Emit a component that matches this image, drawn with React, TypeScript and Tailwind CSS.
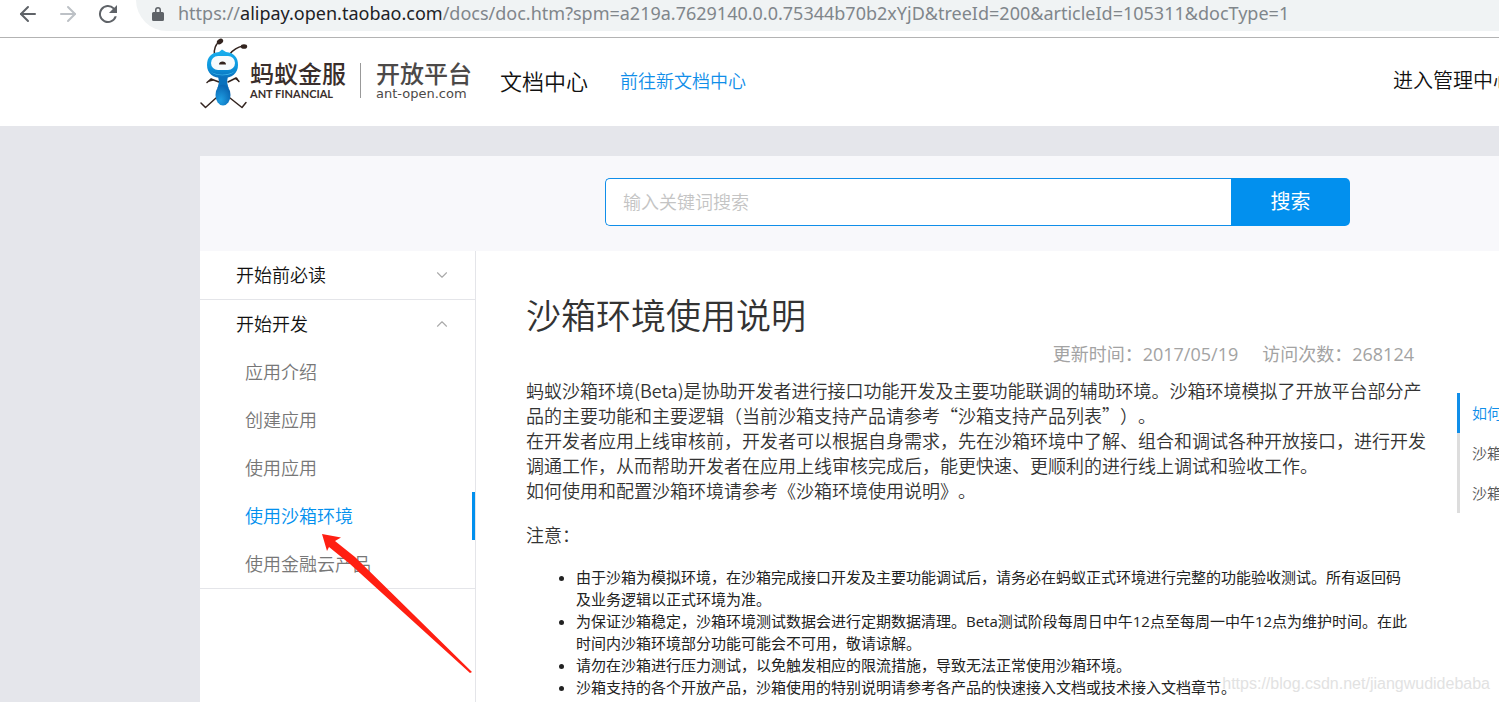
import { ArrowLeft, ArrowRight, ChevronDown, ChevronUp } from 'lucide-react';

const articles = ['应用介绍', '创建应用', '使用应用', '使用沙箱环境', '使用金融云产品'];

const intro = [
  '蚂蚁沙箱环境(Beta)是协助开发者进行接口功能开发及主要功能联调的辅助环境。沙箱环境模拟了开放平台部分产',
  '品的主要功能和主要逻辑（当前沙箱支持产品请参考“沙箱支持产品列表”）。',
  '在开发者应用上线审核前，开发者可以根据自身需求，先在沙箱环境中了解、组合和调试各种开放接口，进行开发',
  '调通工作，从而帮助开发者在应用上线审核完成后，能更快速、更顺利的进行线上调试和验收工作。',
  '如何使用和配置沙箱环境请参考《沙箱环境使用说明》。',
];

const notes = [
  '由于沙箱为模拟环境，在沙箱完成接口开发及主要功能调试后，请务必在蚂蚁正式环境进行完整的功能验收测试。所有返回码及业务逻辑以正式环境为准。',
  '为保证沙箱稳定，沙箱环境测试数据会进行定期数据清理。Beta测试阶段每周日中午12点至每周一中午12点为维护时间。在此时间内沙箱环境部分功能可能会不可用，敬请谅解。',
  '请勿在沙箱进行压力测试，以免触发相应的限流措施，导致无法正常使用沙箱环境。',
  '沙箱支持的各个开放产品，沙箱使用的特别说明请参考各产品的快速接入文档或技术接入文档章节。',
];

const AntLogo = () => (
  <svg className="h-[72px] w-[48px] shrink-0" viewBox="0 0 48 72" fill="none">
    <defs>
      <linearGradient id="head" x1="0" y1="0" x2="0" y2="1">
        <stop offset="0" stopColor="#1ab0ee" />
        <stop offset="0.6" stopColor="#0d97de" />
        <stop offset="1" stopColor="#0b6fbb" />
      </linearGradient>
      <radialGradient id="belly" cx="0.35" cy="0.75" r="0.7">
        <stop offset="0" stopColor="#1f9fe3" />
        <stop offset="1" stopColor="#0a68b4" />
      </radialGradient>
    </defs>
    <g stroke="#33241f" strokeWidth="1.5" strokeLinecap="round" strokeLinejoin="round">
      <path d="M14.500 17C13.500 11 16 6 19 4" />
      <path d="M30 16C33 12 38 9 43 8" />
      <path d="M19 44l-8-3-4 3.500" />
      <path d="M28 44l8-4 3 3.500" />
      <path d="M16 60L5.500 69.500 1 65" />
      <path d="M30 60l12 9.500 4-5" />
    </g>
    <path d="M8 44l3-3.500 3 2zM34 40.500l3-1 2 4z" fill="#33241f" />
    <ellipse cx="20" cy="3.500" rx="3.400" ry="2.500" transform="rotate(-35 20 3.500)" fill="#33241f" />
    <ellipse cx="44" cy="8.500" rx="3.200" ry="2.300" fill="#33241f" />
    <path d="M18 38h10l-1 6 1.500 6h-11l1.500-6z" fill="#0a72bd" />
    <path d="M19 14l3-2.500 4 2.500c8 1 12 5 12 13 0 8.500-6 13-15.500 13S7 35.500 7 27c0-8 4-12 12-13z" fill="url(#head)" />
    <path d="M10 33c6 5 18 5 25 0-3 3-7 4.200-12.500 4.200S13 36 10 33z" fill="#4fc6f5" />
    <rect x="11" y="18" width="24" height="14" rx="7" fill="#f7fbfd" />
    <path d="M19 26.500c0-2 1.500-3 3.500-3s3.500 1 3.500 3z" fill="#33241f" />
    <ellipse cx="23" cy="57" rx="7.500" ry="10.500" fill="url(#belly)" />
  </svg>
);

const AddressBar = () => (
  <div className="flex h-[38px] items-start border-b border-[#b3b3b3] bg-white pl-4">
    <button aria-label="Back" className="mt-0.5 text-[#5f6368]">
      <ArrowLeft size={24} strokeWidth={2} />
    </button>
    <button aria-label="Forward" className="mt-0.5 ml-4 text-[#bdc1c6]">
      <ArrowRight size={24} strokeWidth={2} />
    </button>
    <button aria-label="Reload" className="mt-0.5 ml-4 text-[#5f6368]">
      <svg className="size-6" viewBox="0 0 24 24" fill="currentColor">
        <path d="M18.360 5.640A9 9 0 1 0 20.700 14.200h-2.100A7 7 0 1 1 16.900 7.100L13 11h8V3z" />
      </svg>
    </button>
    <div className="ml-4 flex h-[31px] flex-1 items-center rounded-bl-full bg-[#f0f3f4] pb-1 pl-4">
      <svg className="h-4 w-3 shrink-0" viewBox="0 0 12 16" fill="#5f6368">
        <path d="M1.500 6H3V4a3 3 0 0 1 6 0v2h1.500A1.500 1.500 0 0 1 12 7.500v6A1.500 1.500 0 0 1 10.500 15h-9A1.500 1.500 0 0 1 0 13.500v-6A1.500 1.500 0 0 1 1.500 6zm3 0h3V4a1.500 1.500 0 0 0-3 0z" />
      </svg>
      <span className="ml-3.5 font-['Noto_Sans'] text-[18px] whitespace-nowrap text-[#80868b]">
        https://<span className="text-[#202124]">alipay.open.taobao.com</span>
        /docs/doc.htm?spm=a219a.7629140.0.0.75344b70b2xYjD&amp;treeId=200&amp;articleId=105311&amp;docType=1
      </span>
    </div>
  </div>
);

const Header = () => (
  <header className="flex h-[88px] items-center overflow-hidden bg-white pb-0.5 pl-[200px] whitespace-nowrap">
    <a href="#" className="flex h-full items-start text-[#3a2e2b]">
      <AntLogo />
      <span className="mt-[22px] ml-0.5 block">
        <span className="block text-[24px] leading-[28px] font-medium">蚂蚁金服</span>
        <span className="block font-['Lato'] text-[11px] leading-[12px] font-bold">ANT FINANCIAL</span>
      </span>
      <span className="mt-[25px] ml-[14px] block h-[35px] w-px bg-[#999]" />
      <span className="mt-[22px] ml-[15px] block text-[#4c4948]">
        <span className="block text-[24px] leading-[28px] font-medium">开放平台</span>
        <span className="block font-['DejaVu_Sans'] text-[13px] leading-[12px]">ant-open.com</span>
      </span>
    </a>
    <span className="ml-7 text-[22px] font-[350] text-[#111]">文档中心</span>
    <a href="#" className="ml-8 text-[18px] font-[350] text-[#108ee9]">前往新文档中心</a>
    <a href="#" className="mr-[-14px] ml-auto text-[20px] font-[350] text-[#111]">进入管理中心</a>
  </header>
);

const SearchBar = () => (
  <form className="flex h-[95px] items-start bg-[#f8f8fb] pt-[22px] pr-[149px] pl-[405px]">
    <input
      type="search"
      aria-label="输入关键词搜索"
      placeholder="输入关键词搜索"
      className="h-12 min-w-0 flex-1 rounded-l-[5px] border border-r-0 border-[#108ee9] bg-white px-[17px] text-[18px] font-[350] outline-none placeholder:text-[#c4c4c4]"
    />
    <button type="button" className="h-12 w-[119px] rounded-r-[5px] bg-[#0290ee] text-[20px] text-white">
      搜索
    </button>
  </form>
);

const Sidebar = () => (
  <nav className="w-[276px] shrink-0 border-r border-[#e4e5e9] text-[18px] font-[350]">
    <button className="flex h-[49px] w-full items-center justify-between border-b border-[#e4e5e9] pr-6 pl-9 text-[#111]">
      开始前必读
      <ChevronDown size={18} strokeWidth={1.5} className="text-[#aaa]" />
    </button>
    <div className="border-b border-[#e4e5e9]">
      <button className="flex h-12 w-full items-center justify-between pr-6 pl-9 text-[#111]">
        开始开发
        <ChevronUp size={18} strokeWidth={1.5} className="text-[#aaa]" />
      </button>
      {articles.map((name) => (
        <a
          key={name}
          href="#"
          className={
            name === '使用沙箱环境'
              ? 'flex h-12 items-center border-r-3 border-[#0290ee] pl-[45px] text-[#0290ee]'
              : 'flex h-12 items-center pl-[45px] text-[#777]'
          }
        >
          {name}
        </a>
      ))}
    </div>
  </nav>
);

const Article = () => (
  <article className="min-w-0 flex-1 pt-10 pr-[43px] pl-[50px] text-[#333]">
    <h1 className="text-[35px] leading-[50px] font-[350]">沙箱环境使用说明</h1>
    <p className="mt-px flex justify-end gap-6 text-[18px] leading-[25px] text-[#a3a3a3]">
      <span>更新时间：2017/05/19</span>
      <span>访问次数：268124</span>
    </p>
    <p className="mt-[11px] font-['Noto_Sans_CJK_SC'] text-[18px] leading-[25px] font-[350] whitespace-nowrap [text-spacing-trim:space-all]">
      {intro.map((line) => (
        <span key={line} className="block">{line}</span>
      ))}
    </p>
    <p className="mt-5 text-[18px] leading-[25px] font-[350]">注意：</p>
    <ul className="mt-[18px] list-disc pl-[50px] text-[15px] leading-[22px] text-[#222]">
      {notes.map((note) => (
        <li key={note}>{note}</li>
      ))}
    </ul>
  </article>
);

const Contents = () => (
  <aside className="mt-[142px] w-[42px] shrink-0 overflow-hidden text-[15px] font-[350] whitespace-nowrap text-[#555]">
    <a href="#" className="flex h-10 items-center border-l-3 border-[#108ee9] pl-3 text-[#108ee9]">如何</a>
    <a href="#" className="flex h-10 items-center border-l-3 border-[#ddd] pl-3">沙箱</a>
    <a href="#" className="flex h-10 items-center border-l-3 border-[#ddd] pl-3">沙箱</a>
  </aside>
);

const App = () => {
  return (
    <div
      lang="zh-CN"
      className="relative flex h-screen flex-col overflow-hidden bg-[#e5e6eb] font-['Open_Sans','Noto_Sans_CJK_SC',sans-serif]"
    >
      <AddressBar />
      <Header />
      <main className="mt-[30px] ml-[200px] flex flex-1 flex-col">
        <SearchBar />
        <div className="flex flex-1 bg-white">
          <Sidebar />
          <Article />
          <Contents />
        </div>
      </main>
      <svg className="absolute top-[533px] left-[321px] h-[140px] w-[151px]" viewBox="0 0 151 140">
        <path d="M1 1L20 4.500 14 8 34 24 151 139 149 140 29 31 8 14 6 18z" fill="#ff1f12" />
      </svg>
      <span className="absolute right-[9px] bottom-[6px] font-['Liberation_Sans'] text-[16px] text-[#e2e2e2]">
        https://blog.csdn.net/jiangwudidebaba
      </span>
    </div>
  );
};

export default App;
